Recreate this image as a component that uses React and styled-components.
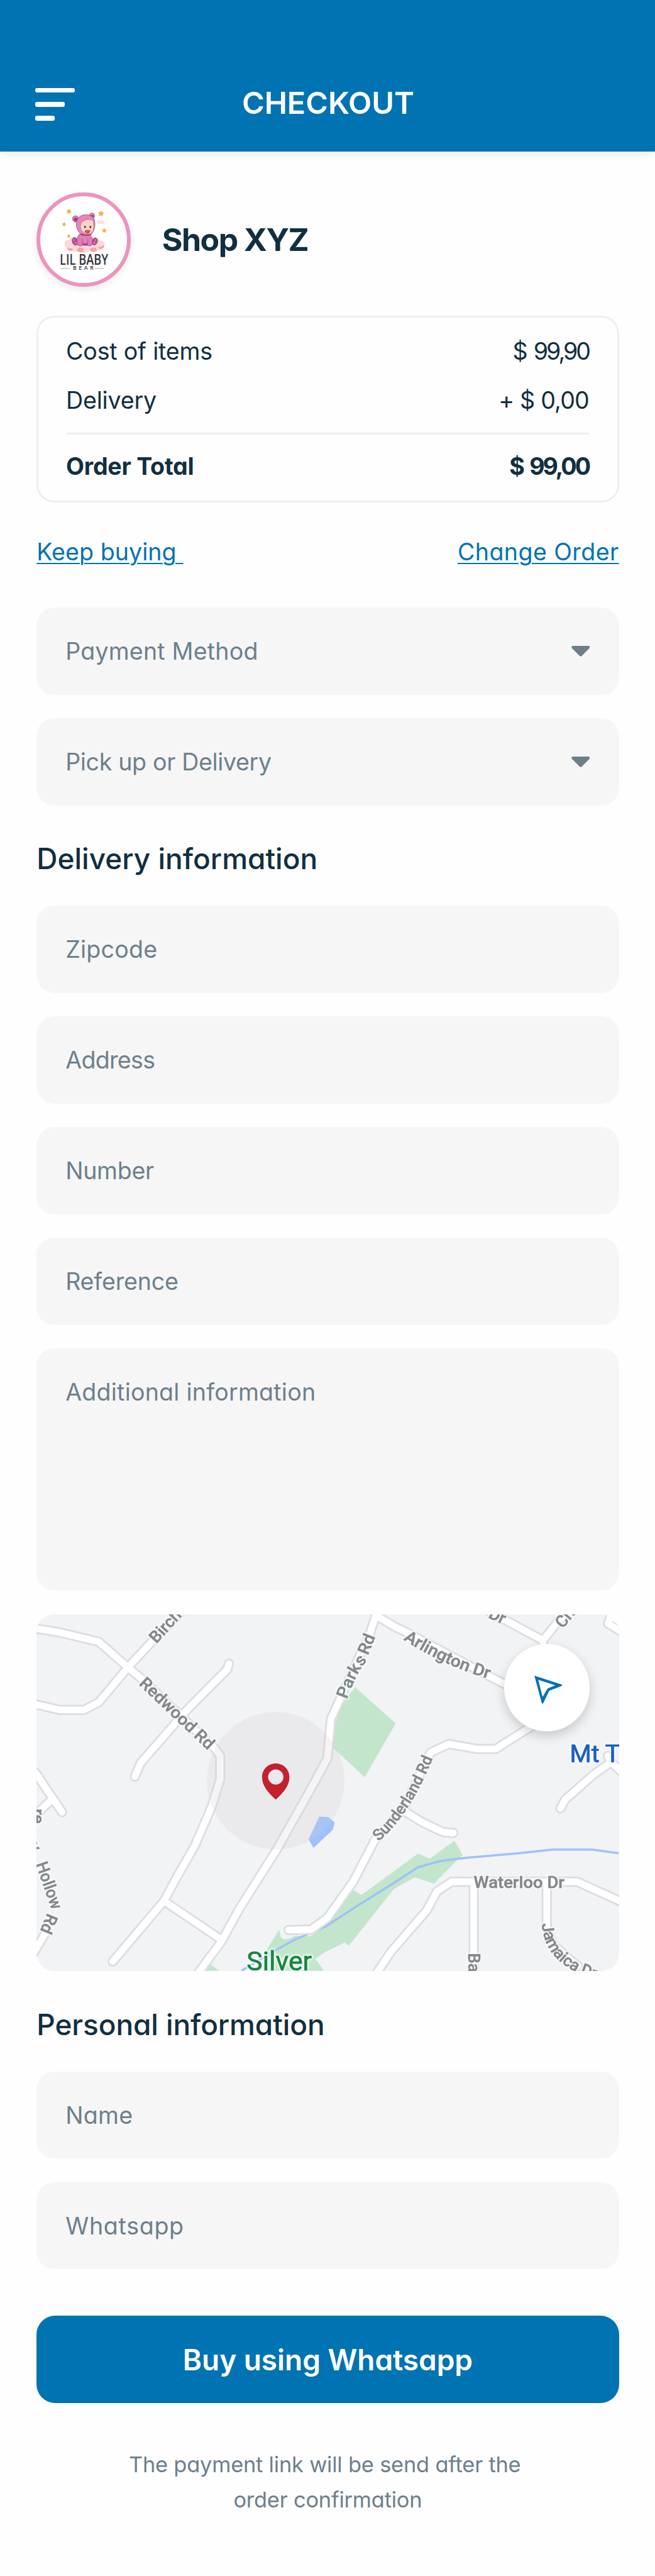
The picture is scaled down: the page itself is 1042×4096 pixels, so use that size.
import React from 'react';
import styled, { createGlobalStyle } from 'styled-components';

const color = {
  primary: '#0073b2',
  ink: '#112f40',
  muted: '#6d808b',
  field: '#f6f6f6',
  line: '#eeeeee',
  page: '#fefefe',
};

const GlobalStyle = createGlobalStyle`
  * { box-sizing: border-box; }
  body {
    margin: 0;
    background: ${color.page};
    color: ${color.ink};
    font-family: Inter, 'Liberation Sans', sans-serif;
    font-feature-settings: 'cv11';
    font-size: 37.6px;
    line-height: 50px;
  }
  button, a { font: inherit; font-feature-settings: inherit; color: inherit; }
`;

const Page = styled.div`
  width: 1042px;
  height: 4096px;
  display: flex;
  flex-direction: column;
  overflow: hidden;
`;

const Header = styled.header`
  height: 240.8px;
  flex: none;
  padding: 91px 55.5px 0;
  display: grid;
  grid-template-columns: 1fr auto 1fr;
  align-items: center;
  background: ${color.primary};
  box-shadow: 0 7px 14px -4px rgba(0, 0, 0, 0.09);
`;

const MenuButton = styled.button`
  border: 0;
  padding: 0;
  background: none;
  display: flex;
  flex-direction: column;
  align-items: flex-start;
  gap: 14.8px;
`;

const MenuBar = styled.span`
  width: ${(p) => p.$width}px;
  height: 7.4px;
  border-radius: 3px;
  background: #fff;
`;

const Title = styled.h1`
  margin: 0 0 4px 2px;
  color: #fff;
  font-size: 48.6px;
  font-weight: 600;
  letter-spacing: -0.1px;
  line-height: 60px;
`;

const Main = styled.main`
  padding: 64.8px 57.5px 0 58.3px;
  display: flex;
  flex-direction: column;
`;

const Shop = styled.section`
  display: flex;
  align-items: center;
  gap: 49.4px;
`;

const Avatar = styled.div`
  width: 150px;
  height: 150px;
  border: 6.5px solid #ec93be;
  border-radius: 50%;
  background: #fff;
  box-shadow: 0 4px 12px rgba(0, 0, 0, 0.09);
  overflow: hidden;
  svg { display: block; width: 100%; height: 100%; }
`;

const ShopName = styled.h2`
  margin: 0;
  font-size: 50px;
  font-weight: 700;
  letter-spacing: -1.5px;
  line-height: 60px;
`;

const Text = styled.span`
  letter-spacing: ${(p) => p.$track || 0}px;
  white-space: pre;
`;

const Amount = styled(Text)`
  word-spacing: ${(p) => p.$space || 0}px;
`;

const Summary = styled.section`
  margin-top: 46.3px;
  height: 297px;
  border: 3px solid ${color.line};
  border-radius: 28px;
  padding: 28.9px 44.5px 0 43.8px;
`;

const SummaryRow = styled.div`
  display: flex;
  justify-content: space-between;
  height: 50px;
  margin-bottom: 28.7px;
  font-weight: ${(p) => (p.$strong ? 700 : 400)};
  &:nth-child(2) { margin-bottom: 25.6px; }
`;

const Divider = styled.hr`
  margin: 0 0 26px;
  border: 0;
  height: 3px;
  border-radius: 2px;
  background: ${color.line};
`;

const Links = styled.nav`
  margin-top: 53.9px;
  display: flex;
  justify-content: space-between;
`;

const Link = styled.a`
  color: ${color.primary};
  letter-spacing: ${(p) => p.$track}px;
  white-space: pre;
  text-decoration: underline;
  text-decoration-thickness: 2px;
  text-underline-offset: 3.5px;
`;

const Fields = styled.div`
  display: flex;
  flex-direction: column;
  gap: 37.1px;
  margin-top: ${(p) => p.$top}px;
`;

const Field = styled.div`
  height: ${(p) => (p.$tall ? 385.3 : 138.9)}px;
  border-radius: 28px;
  padding: 45.2px 46.3px 0 45.9px;
  display: flex;
  justify-content: space-between;
  align-items: flex-start;
  background: ${color.field};
  color: ${color.muted};
`;

const Caret = styled.svg`
  width: 29.6px;
  height: 16.7px;
  margin-top: 16px;
  fill: #6d7f88;
`;

const SectionTitle = styled.h3`
  margin: ${(p) => p.$top}px 0 0;
  font-size: 46px;
  font-weight: 500;
  letter-spacing: ${(p) => p.$track}px;
  line-height: 60px;
`;

const MapCard = styled.div`
  position: relative;
  height: 566.4px;
  margin-top: 0.9px;
  border-radius: 28px;
  overflow: hidden;
  background: #f1f3f5;
`;

const MapCanvas = styled.svg`
  display: block;
  width: 100%;
  height: 100%;
  font-family: Roboto, 'Liberation Sans', sans-serif;
  fill: none;
`;

const Casing = styled.g`
  stroke: #dcdde1;
  stroke-width: 17.5px;
  stroke-linejoin: round;
  stroke-linecap: round;
`;

const Surface = styled(Casing)`
  stroke: #ffffff;
  stroke-width: 11.5px;
`;

const Labels = styled.g`
  filter: drop-shadow(0 0 2px #f9fafb) drop-shadow(0 0 2px #f9fafb) drop-shadow(0 0 2px #f9fafb);
`;

const StreetLabel = styled.text`
  fill: #83898a;
  stroke: #83898a;
  stroke-width: 0.6px;
  font-weight: 500;
`;

const PlaceLabel = styled.text`
  fill: ${(p) => p.$fill};
  font-weight: 400;
  stroke: ${(p) => p.$fill};
  stroke-width: 0.8px;
`;

const LocateButton = styled.button`
  position: absolute;
  top: 46.3px;
  right: 46.3px;
  width: 136.2px;
  height: 138.9px;
  border: 0;
  padding: 0;
  border-radius: 50%;
  background: #fff;
  box-shadow: 0 7px 18px rgba(0, 0, 0, 0.18);
  svg { display: block; width: 100%; height: 100%; fill: ${color.primary}; }
`;

const BuyButton = styled.button`
  margin: 74px 0 0;
  height: 138.9px;
  border: 0;
  border-radius: 30px;
  padding: 0;
  background: ${color.primary};
  color: #fff;
  font-size: 46px;
  font-weight: 600;
  letter-spacing: -0.05px;
  line-height: 60px;
`;

const Note = styled.p`
  margin: 70px 0 0;
  text-align: center;
  white-space: pre;
  color: ${color.muted};
  font-size: 34.4px;
  letter-spacing: -0.2px;
  line-height: 55.6px;
`;

const NoteLine = styled.span`
  display: block;
`;

const star = (x, y, r) =>
  Array.from({ length: 10 }, (_, i) => {
    const a = -Math.PI / 2 + 0.15 + (i * Math.PI) / 5;
    const d = i % 2 ? r * 0.48 : r;
    return `${(x + d * Math.cos(a)).toFixed(1)},${(y + d * Math.sin(a)).toFixed(1)}`;
  }).join(' ');

function Logo() {
  return (
    <svg viewBox="90 81 444 444">
      <g fill="#fbb72c" stroke="#c98a55" strokeWidth="1.5">
        {[[237, 159, 13], [401, 170, 15], [212, 225, 10], [418, 257, 11.5], [236, 285, 8.5]].map((s) => (
          <polygon key={s[0]} points={star(...s)} />
        ))}
      </g>
      <path d="M379 213c2-7 10-8 15-6 8-4 16-2 18 2 8-1 9 9 2 10-5 4-12 3-16 1-8 3-19 0-19-7z" fill="#fbe9ea" stroke="#eebfc6" strokeWidth="1.5" />
      <path d="M217 326c-3-15 10-21 22-17 4-15 27-24 38-12h62c8-9 30-6 34 8 12-6 19 0 22 7 16-4 28 10 20 22 4 16-14 22-27 19-8 14-36 17-46 3-12 16-48 18-58 1-12 11-38 5-42-12-16 2-25-8-25-19z" fill="#fadadb" stroke="#edb0b2" strokeWidth="2" />
      <g fill="#f6a3a6">
        <path d="M226 340q8 12 28 8 8 13-12 13-14-2-16-21z" />
        <ellipse cx="296" cy="356" rx="18" ry="12" />
        <ellipse cx="362" cy="354" rx="18" ry="11" />
        <path d="M384 343q20-2 31-14 4 18-16 21-9 1-15-7z" />
      </g>
      <g stroke="#7b3a60" strokeWidth="2.2">
        <circle cx="271" cy="197" r="16" fill="#e77db8" />
        <circle cx="271" cy="199" r="9" fill="#b72b87" stroke="none" />
        <circle cx="355" cy="181" r="14" fill="#e77db8" />
        <circle cx="356" cy="184" r="7.5" fill="#b72b87" stroke="none" />
        <ellipse cx="268" cy="312" rx="14" ry="20" transform="rotate(-18 268 312)" fill="#c34894" />
        <ellipse cx="369" cy="312" rx="13" ry="19" transform="rotate(18 369 312)" fill="#c34894" />
        <path d="M290 276q-20 24-8 54 12 10 26 2h20q16 8 26-2 10-32-10-54z" fill="#e27cb8" />
        <path d="M303 319q17 10 33 0l-6 12h-18z" fill="#b9268b" stroke="none" />
        <path d="M304 300q0 22 5 30M334 300q0 22-5 30" fill="none" strokeWidth="1.6" />
        <path d="M294 272q-26-30-17-65 12-34 52-31 41 2 41 45 0 34-18 55-26 8-58-4z" fill="#e984bd" />
        <path d="M298 252q-10-38 22-49 24-9 42 3 10 60-18 69-30 1-46-23z" fill="#fbd3c4" strokeWidth="1.4" />
        <path d="M298 276q26 10 52 0" fill="none" stroke="#a51c78" strokeWidth="4" />
      </g>
      <g fill="#4b3436">
        <ellipse cx="319" cy="238" rx="4.5" ry="6" />
        <ellipse cx="347" cy="238" rx="4.5" ry="6" />
      </g>
      <g fill="#e77db8">
        <ellipse cx="262" cy="306" rx="4" ry="5" />
        <ellipse cx="272" cy="320" rx="6" ry="5" />
        <ellipse cx="372" cy="306" rx="4" ry="5" />
        <ellipse cx="366" cy="320" rx="6" ry="5" />
      </g>
      <path d="M319 258q14-6 26-1-2 14-13 14-10-1-13-13z" fill="#e05a52" stroke="#6d2a2a" strokeWidth="2" />
      <g fontFamily="'Open Sans', sans-serif" fontWeight="600" fill="#333638">
        <text x="190" y="431" textLength="248" lengthAdjust="spacingAndGlyphs" fontSize="74">LIL BABY</text>
        <text x="257" y="459" textLength="106" lengthAdjust="spacing" fontSize="28">BEAR</text>
      </g>
      <path d="M195 450h45M370 450h46" stroke="#c4c4c4" strokeWidth="5" />
    </svg>
  );
}

const roads = [
  'M-8 23 L0 24.4 L40 31 L107 47 L157 91 L180 110 L307 231 L315.5 243 V283 L301 330 L272 397 L244 446 L219 492 L131 596',
  'M-8 153 L40 164 H81.5 L107 151 L157 91 L201.5 43.5 L250 -6',
  'M330.6 84.5 L328 94 L258 164.5 L179 255 L169 278.5',
  'M-8 266 L0 274 L28 316 L44 339.5',
  'M28 316 L0 343 L-8 350',
  'M18 543 L-6 583',
  'M219 492 L317 558',
  'M588 -14 L583.5 0 L573 32 L522 144 L506 179 L499.6 247.5 L468 305.5 L412 405 L349 504.5 L317 562.5 L270 626',
  'M585 3 L616 21.5 L634 30 L774.5 104.5 L803 119 L850 140',
  'M780 -2 L800 7 L870 44.5 L897 11 L930 -20',
  'M870 44.5 V80',
  'M1010 18 L986 2 L982 16 L1010 33',
  'M880 176 L848 193.5 L789 231 H756.5 L708 222.5 L677 237 L630 334.5 L582 386 L544 459 L499.6 521 L471.6 541 L433 542',
  'M630 336.5 L663 357 L699 374 L716 375',
  'M981.6 243 L987 253.7 L958 274 L908 318 L900 333',
  'M987 253.7 L1010 275',
  'M1008 495 L929 459 H713 L688 475.5 L670 508.6 L609 579 L580 622',
  'M751 459 V630',
  'M876.4 459 V538 L888 568 L930 604',
];

const labels = [
  { id: 'birch', d: 'M206 51 L300 -52', text: 'Birchwood' },
  { id: 'redwood', d: 'M175 120 L296 235', text: 'Redwood Rd', length: 165 },
  { id: 'parks', d: 'M533 146 Q551 98 564 84 L584 34', text: 'Parks Rd', length: 119 },
  { id: 'arlington', d: 'M630 43 Q700 88 778 111', text: 'Arlington Dr', length: 162 },
  { id: 'dr', d: 'M775 5 L815 24', text: 'Dr' },
  { id: 'ch', d: 'M904 25 L960 -42', text: 'Cha' },
  { id: 'sunderland', d: 'M588 390 Q644 340 682 244', text: 'Sunderland Rd', length: 172, size: 27 },
  { id: 'waterloo', d: 'M751 470 H912', text: 'Waterloo Dr', length: 156 },
  { id: 'ba', d: 'M742 581 V680', text: 'Bay' },
  { id: 'jamaica', d: 'M868 531 Q873 602 960 626 L1010 636', text: 'Jamaica Dr', size: 28 },
  { id: 'y', d: 'M-14 396 L-6 414', text: 'y' },
  { id: 'hollow', d: 'M-1 429 Q12 466 27 509', text: 'Hollow', length: 84 },
  { id: 'rd', d: 'M19 512 L4 548', text: 'Rd', length: 34 },
  { id: 're', d: 'M-6 334 L-6 372', text: 're' },
];

function MapPreview() {
  return (
    <MapCard>
      <MapCanvas viewBox="0 0 1000 611.5" preserveAspectRatio="none">
        <g fill="#c3e5cc">
          <path d="M547.4 125 L617 187 L563.7 279.4 L509.6 229 L511 193.5 L526 152Z" />
          <path d="M718 388.4 L732 413 L682.6 462 L650 451.4 L614 471.3 L536.6 568.7 L529.4 563.3 L497 579 L479 591 L494 612 H390 L396 575 L417 541 L420 554 Q426 562 443.5 552 H472 L504 521 L542 471.3 L558 481.7 L655.5 410.4 L675.4 419.5Z" />
          <path d="M286 612 L298 600 L314 612Z" />
        </g>
        <path d="M1000 410 L954.6 403.7 H886 L828.5 410 L735 418 L693 423.6 L655.5 434 L614 461 L554.6 498 L497 535.6 L443.5 558.4 L412 576 L352 612" stroke="#9dc1fb" strokeWidth="3.8" />
        <path d="M485.6 347 L501.4 348 L512 357 L509 369.7 L475.8 400.8 L467.4 386.3Z" fill="#9dc1fb" />
        <Casing>{roads.map((d) => <path key={d} d={d} />)}</Casing>
        <Surface>{roads.map((d) => <path key={d} d={d} />)}</Surface>
        <Labels>
          {labels.map((l) => (
            <React.Fragment key={l.id}>
              <path id={`label-${l.id}`} d={l.d} />
              <StreetLabel fontSize={l.size || 28.5}>
                <textPath href={`#label-${l.id}`} textLength={l.length} lengthAdjust="spacingAndGlyphs">{l.text}</textPath>
              </StreetLabel>
            </React.Fragment>
          ))}
          <PlaceLabel $fill="#1b5fc4" x="916" y="254" fontSize="42.5">Mt T</PlaceLabel>
          <PlaceLabel $fill="#1a8640" x="361" y="611" fontSize="45" textLength="112" lengthAdjust="spacingAndGlyphs">Silver</PlaceLabel>
        </Labels>
        <circle cx="411" cy="285.6" r="118" fill="rgba(214,205,208,0.24)" />
        <path fillRule="evenodd" fill="#c4202e" d="M411 256 C424 256 434.5 266 434.5 279.5 C434.5 294 424 306 411 318 C398 306 387.5 294 387.5 279.5 C387.5 266 398 256 411 256Z M411 266.2 A13.1 13 0 1 0 411 292.2 A13.1 13 0 1 0 411 266.2Z" />
      </MapCanvas>
      <LocateButton aria-label="Locate">
        <svg viewBox="78 66 441 450" preserveAspectRatio="none">
          <path fillRule="evenodd" d="M234 230 L239 231 L375 275 Q377 279 375 282 L310 307 L279 372 Q275 374 272 371Z M254 251 L341 279 L302 295 L276 339Z" />
        </svg>
      </LocateButton>
    </MapCard>
  );
}

function Select({ label, track }) {
  return (
    <Field>
      <Text $track={track}>{label}</Text>
      <Caret viewBox="0 0 32 18">
        <path d="M2 0H30Q33 1 31 4L18 17Q16 19 14 17L1 4Q-1 1 2 0Z" />
      </Caret>
    </Field>
  );
}

function Input({ label, track, tall }) {
  return (
    <Field $tall={tall}>
      <Text $track={track}>{label}</Text>
    </Field>
  );
}

export default function App() {
  return (
    <Page>
      <GlobalStyle />
      <Header>
        <MenuButton aria-label="Menu">
          <MenuBar $width={63} />
          <MenuBar $width={47.5} />
          <MenuBar $width={31.5} />
        </MenuButton>
        <Title>CHECKOUT</Title>
      </Header>
      <Main>
        <Shop>
          <Avatar><Logo /></Avatar>
          <ShopName>Shop XYZ</ShopName>
        </Shop>
        <Summary>
          <SummaryRow><Text $track={-0.2}>Cost of items</Text><Amount $track={-3} $space={4.5}>$ 99,90</Amount></SummaryRow>
          <SummaryRow><Text $track={-0.2}>Delivery</Text><Amount $track={-0.8}>+ $ 0,00</Amount></SummaryRow>
          <Divider />
          <SummaryRow $strong><Text $track={-0.25}>Order Total</Text><Amount $track={-3} $space={4.5}>$ 99,00</Amount></SummaryRow>
        </Summary>
        <Links>
          <Link $track={0.05}>{'Keep buying '}</Link>
          <Link $track={0.4}>Change Order</Link>
        </Links>
        <Fields $top={63.2}>
          <Select label="Payment Method" track={0.2} />
          <Select label="Pick up or Delivery" track={-0.35} />
        </Fields>
        <SectionTitle $top={53.8} $track={0}>Delivery information</SectionTitle>
        <Fields $top={45.6}>
          <Input label="Zipcode" track={0.2} />
          <Input label="Address" track={-0.7} />
          <Input label="Number" track={-0.3} />
          <Input label="Reference" track={-0.2} />
          <Input label="Additional information" track={0.22} tall />
          <MapPreview />
        </Fields>
        <SectionTitle $top={54.7} $track={-0.1}>Personal information</SectionTitle>
        <Fields $top={45}>
          <Input label="Name" track={0.3} />
          <Input label="Whatsapp" track={0.7} />
        </Fields>
        <BuyButton>Buy using Whatsapp</BuyButton>
        <Note>
          <NoteLine>{'The payment link will be send after the '}</NoteLine>
          <NoteLine>order confirmation</NoteLine>
        </Note>
      </Main>
    </Page>
  );
}
